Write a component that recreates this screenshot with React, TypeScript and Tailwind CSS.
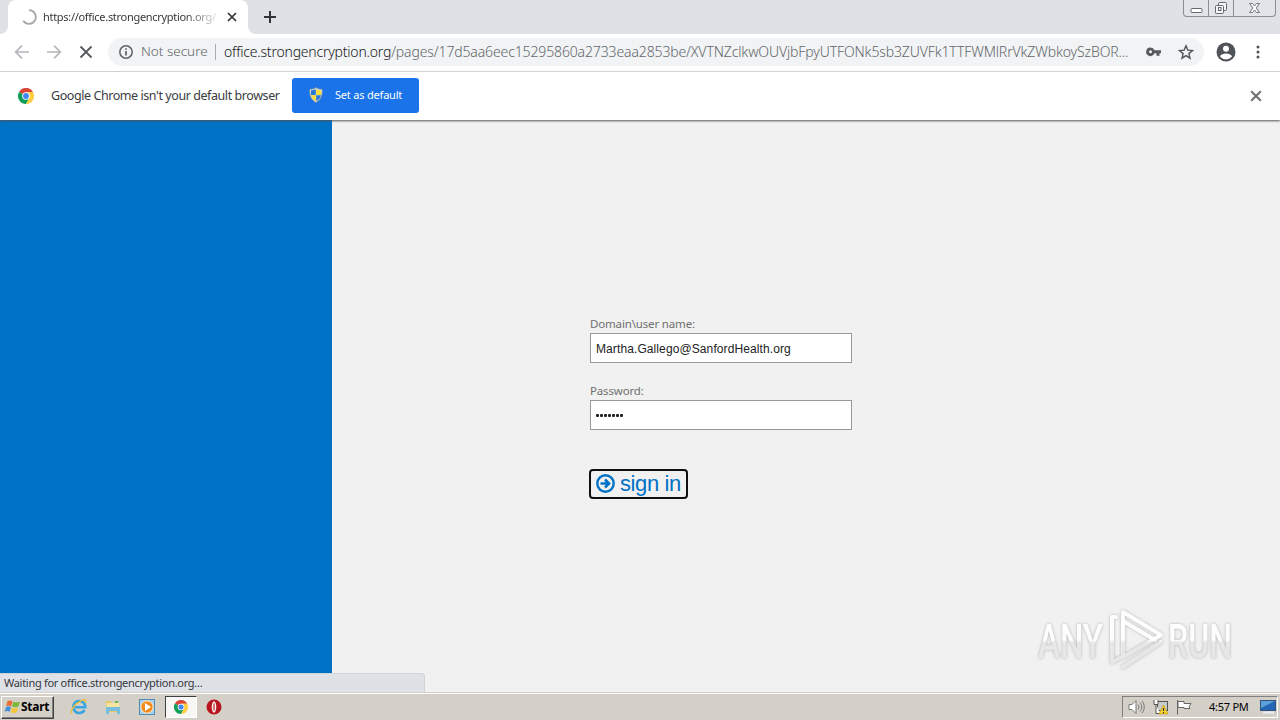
import { type ReactNode } from 'react';

const ui = "font-['Noto_Sans','Open_Sans',sans-serif]";
const arial = "font-['Liberation_Sans',Arial,sans-serif]";

function ChromeLogo({ size }: { size: number }) {
  return (
    <svg width={size} height={size} viewBox="0 0 48 48" className="shrink-0">
      <path d="M24 24 3.2 12A24 24 0 0 1 44.8 12Z" fill="#db4437" />
      <path d="M24 24 3.2 12A24 24 0 0 0 24 48L34.4 30Z" fill="#0f9d58" />
      <path d="M24 12H44.8A24 24 0 0 1 24 48L34.4 30Z" fill="#ffcd40" />
      <circle cx="24" cy="24" r="11.5" fill="#fff" />
      <circle cx="24" cy="24" r="8.7" fill="#4285f4" />
    </svg>
  );
}

function Cross({ size, className }: { size: number; className: string }) {
  return (
    <svg width={size} height={size} viewBox="0 0 10 10" className={className} fill="none" stroke="currentColor">
      <path d="M1 1 9 9M9 1 1 9" strokeWidth={1.7} />
    </svg>
  );
}

function WindowButtons() {
  return (
    <div className="mr-1 ml-auto flex h-[17px] w-[93px] rounded-b-[4px] border border-t-0 border-[#8b8e94] bg-[#e1e4e9] text-[#666970]">
      <div className="flex w-[25px] justify-center border-r border-[#8b8e94]">
        <svg width="13" height="16" fill="#fff" stroke="currentColor">
          <rect x="1" y="8.5" width="11" height="4" rx="1" />
        </svg>
      </div>
      <div className="flex w-[25px] justify-center border-r border-[#8b8e94]">
        <svg width="14" height="16" fill="#f3f4f6" stroke="currentColor">
          <rect x="4.5" y="2.5" width="8" height="8" rx="1" />
          <rect x="1.5" y="5.5" width="8" height="8" rx="1" />
          <rect x="4.5" y="7.5" width="2.5" height="3" />
        </svg>
      </div>
      <div className="flex flex-1 justify-center">
        <svg width="13" height="16" fill="#f8f8f9" stroke="currentColor" strokeWidth=".9">
          <path d="M1.5 3.5h3l2 2.5 2-2.500h3L8.300 8l3.200 4.500h-3l-2-2.500-2 2.500h-3L4.700 8Z" />
        </svg>
      </div>
    </div>
  );
}

function TabStrip() {
  return (
    <div className="flex h-[34px] bg-[#dee1e6] pl-2">
      <div className="relative flex w-60 items-center rounded-t-lg bg-white pl-[13px]">
        <svg viewBox="0 0 8 8" className="absolute bottom-0 -left-2 size-2 fill-white">
          <path d="M8 0v8H0A8 8 0 0 0 8 0Z" />
        </svg>
        <svg viewBox="0 0 8 8" className="absolute -right-2 bottom-0 size-2 fill-white">
          <path d="M0 0v8h8A8 8 0 0 1 0 0Z" />
        </svg>
        <svg width="16" height="16" viewBox="0 0 16 16" fill="none" stroke="#a5a8ab" strokeWidth="1.8">
          <path d="M8 1.200a6.800 6.800 0 1 1-5.700 10.500" />
        </svg>
        <span className="ml-[6px] bg-linear-to-r from-[#303236] from-82% to-[#303236]/15 bg-clip-text text-[11px] tracking-[-0.300px] whitespace-nowrap text-transparent">
          https://office.strongencryption.org/
        </span>
        <Cross size={10} className="absolute top-[12px] left-[219px] text-[#303338]" />
      </div>
      <svg width="12" height="12" className="mt-[11px] ml-4" stroke="#303338" strokeWidth="2">
        <path d="M0 6h12M6 0v12" />
      </svg>
      <WindowButtons />
    </div>
  );
}

function Toolbar() {
  return (
    <div className="flex h-[38px] items-center border-b border-[#d9dbde] bg-white pb-[2px] pl-[14px]">
      <svg width="16" height="16" viewBox="0 0 16 16" fill="none" stroke="#b5b7ba" strokeWidth="1.7">
        <path d="M15 8H2M8 1.700 1.700 8 8 14.300" />
      </svg>
      <svg width="16" height="16" viewBox="0 0 16 16" fill="none" stroke="#b5b7ba" strokeWidth="1.7" className="ml-4">
        <path d="M1 8h13M8 1.700 14.300 8 8 14.300" />
      </svg>
      <svg width="14" height="14" viewBox="0 0 14 14" stroke="#55585d" strokeWidth="1.8" className="ml-[17px]">
        <path d="m1.500 1.500 11 11M12.500 1.500l-11 11" />
      </svg>
      <div className="ml-[15px] flex h-7 w-[1096px] items-center rounded-full bg-[#f1f3f4] pl-[11px]">
        <svg width="14" height="14" viewBox="0 0 14 14" fill="none" stroke="#5f6368" strokeWidth="1.5">
          <circle cx="7" cy="7" r="6.2" />
          <path d="M7 6v4.500M7 3.300v1.500" strokeWidth="1.7" />
        </svg>
        <span className="ml-2 w-[67px] text-[13.5px] font-light whitespace-nowrap text-[#5f6368]">Not secure</span>
        <span className="ml-[7px] h-4 w-px bg-[#a9abae]" />
        <span className="ml-2 w-[911px] text-[14px] font-light whitespace-nowrap text-[#63666b]">
          <span className="tracking-[-0.210px] text-[#17181a]">office.strongencryption.org</span>
          <span className="tracking-[-0.130px]">
            /pages/17d5aa6eec15295860a2733eaa2853be/XVTNZclkwOUVjbFpyUTFONk5sb3ZUVFk1TTFWMlRrVkZWbkoySzBOR...
          </span>
        </span>
        <svg width="15" height="10" viewBox="0 0 15 10" fill="#55585d" className="ml-[11px]">
          <path
            fillRule="evenodd"
            d="M4.500.500a4.300 4.300 0 0 1 4 2.800H15v3h-1.500v2.400h-3V6.300h-2A4.300 4.300 0 1 1 4.500.500Zm0 2.800a1.500 1.500 0 1 0 0 3 1.500 1.500 0 0 0 0-3Z"
          />
        </svg>
        <svg width="16" height="16" viewBox="0 0 16 16" fill="none" stroke="#505358" strokeWidth="1.4" className="ml-[17px]">
          <path d="m8 1.800 1.800 4.300 4.700.4-3.600 3.100 1.100 4.600L8 11.700l-4 2.500 1.100-4.600-3.600-3.100 4.700-.4Z" />
        </svg>
      </div>
      <svg width="20" height="20" viewBox="0 0 20 20" className="ml-3">
        <circle cx="10" cy="10" r="9.5" fill="#505358" />
        <circle cx="10" cy="6.8" r="3" fill="#fff" />
        <path d="M3.900 14.200C5 12.300 7.800 11.500 10 11.500s5 .8 6.100 2.700A7.500 7.500 0 0 1 10 17.300a7.500 7.500 0 0 1-6.100-3.100Z" fill="#fff" />
      </svg>
      <svg width="4" height="14" fill="#505358" className="ml-5">
        <circle cx="2" cy="2" r="1.5" />
        <circle cx="2" cy="7" r="1.5" />
        <circle cx="2" cy="12" r="1.5" />
      </svg>
    </div>
  );
}

function Shield() {
  return (
    <svg width="14" height="16" viewBox="0 0 14 16">
      <path
        d="M7 .5C5 2 3 2.300.8 2.300.6 8 1.500 12.500 7 15.500c5.500-3 6.400-7.500 6.200-13.200C11 2.300 9 2 7 .5Z"
        fill="#d8dcd6"
        stroke="#8a9098"
        strokeWidth=".6"
      />
      <path d="M6.800 2C5.300 3 3.700 3.400 2 3.500V8h4.800Z" fill="#2977d4" />
      <path d="M7.200 2C8.700 3 10.300 3.400 12 3.500V8H7.200Z" fill="#f9db3c" />
      <path d="M2 8.200h4.800v6C4 12.700 2.500 10.800 2 8.200Z" fill="#f9db3c" />
      <path d="M12 8.200H7.200v6c2.800-1.500 4.300-3.400 4.800-6Z" fill="#2977d4" />
    </svg>
  );
}

function InfoBar() {
  return (
    <div className="relative z-10 flex h-12 items-center bg-white pl-[18px] shadow-[0_1px_2px_#555]">
      <ChromeLogo size={16} />
      <span className="ml-[17px] w-[241px] text-[12.5px] tracking-[-0.430px] whitespace-nowrap text-[#3a3c40]">
        Google Chrome isn't your default browser
      </span>
      <div className="mb-[2px] flex h-[35px] w-[127px] items-center rounded-[3px] bg-[#1a73e8] pl-[17px] text-white">
        <Shield />
        <span className="ml-3 text-[11px] tracking-[-0.200px] whitespace-nowrap">Set as default</span>
      </div>
      <Cross size={12} className="mr-[18px] ml-auto text-[#6d7074]" />
    </div>
  );
}

function Field({ label, children }: { label: string; children: ReactNode }) {
  return (
    <div>
      <div className="h-[17px] text-[11.5px] leading-[16px] tracking-[-0.160px] text-[#707070]">{label}</div>
      <div className={`flex h-[30px] w-[262px] items-center border border-[#999] bg-white px-[5px] ${arial} text-[12px] text-[#222]`}>
        {children}
      </div>
    </div>
  );
}

function Watermark() {
  return (
    <div className="absolute right-[3px] bottom-[13px] opacity-90">
      <svg width="240" height="72" viewBox="0 0 240 72" fill="none" className="drop-shadow-[0_0_1.5px_#aaa]">
        <defs>
          <linearGradient id="fade" x1="0" y1="0" x2="0" y2="66" gradientUnits="userSpaceOnUse">
            <stop offset=".5" stopColor="#fff" />
            <stop offset=".54" stopColor="#e6e6e6" />
          </linearGradient>
        </defs>
        <g className="font-['Roboto',sans-serif] text-[49px] font-medium" fill="url(#fade)">
          <text x="1" y="51" textLength="65" lengthAdjust="spacingAndGlyphs">ANY</text>
          <text x="131" y="51" textLength="64" lengthAdjust="spacingAndGlyphs">RUN</text>
        </g>
        <g stroke="url(#fade)" strokeWidth="4" strokeLinejoin="round" strokeLinecap="round">
          <path d="M79 10h-4v45l10-5" />
          <path d="M86 48V5l38 23-38 22M86 14l32 19M86 60l38-25" />
        </g>
      </svg>
    </div>
  );
}

function Page() {
  return (
    <main className="relative flex h-[572px] bg-[#f1f1f1]">
      <div className="w-[332px] bg-[#0072c6]" />
      <div className="flex flex-col items-start pt-[196px] pl-[258px]">
        <Field label="Domain\user name:">
          <span className="pt-px tracking-[0.100px]">Martha.Gallego@SanfordHealth.org</span>
        </Field>
        <div className="h-5" />
        <Field label="Password:">
          <div className="flex gap-px">
            {Array.from({ length: 7 }, (_, i) => (
              <span key={i} className="size-[3px] rounded-[1px] bg-[#222]" />
            ))}
          </div>
        </Field>
        <div
          className={`mt-[39px] -ml-px flex h-[30px] w-[99px] items-center rounded-[4px] border-2 border-[#101010] pl-[5px] ${arial} text-[22px] text-[#0072c6]`}
        >
          <svg width="19" height="19" viewBox="0 0 19 19" fill="none" stroke="#0072c6" className="mb-px">
            <circle cx="9.5" cy="9.5" r="8.2" strokeWidth="2.4" />
            <path d="M4.500 9.500h8M9 5.500l4 4-4 4" strokeWidth="2.6" />
          </svg>
          <span className="ml-[5px] leading-none tracking-[-0.400px] whitespace-nowrap">sign in</span>
        </div>
      </div>
      <Watermark />
      <div className="absolute bottom-0 left-0 h-[19px] w-[425px] rounded-tr border-t border-r border-[#d0d3d9] bg-[#dee1e6] pl-1 text-[11px] leading-[18px] tracking-[-0.290px] text-[#36383c]">
        Waiting for office.strongencryption.org...
      </div>
    </main>
  );
}

function Taskbar() {
  return (
    <div className="flex h-7 items-center border-t border-[#d4d0c8] bg-[#d4d0c8] pl-px shadow-[inset_0_1px_0_#fff]">
      <div className="mt-px flex h-[23px] w-[53px] items-center border border-t-white border-r-[#404040] border-b-[#404040] border-l-white pl-[2px] shadow-[inset_-1px_-1px_0_#808080]">
        <svg width="17" height="16" viewBox="0 0 17 16" className="shrink-0">
          <path d="M3.500 2.200C5.500 1 7 1.400 8.500 2.300L7.200 7.200C5.500 6.300 4 6.200 2.200 7Z" fill="#ed6a35" />
          <path d="M9.300 2.700c1.700.9 4 .9 6.700-.2L14.500 7.600c-2.300.9-4.500.9-6.400-.1Z" fill="#7bb83c" />
          <path d="M2 7.900c1.700-.8 3.300-.7 5 .2l-1.300 4.700c-1.700-.9-3.200-.9-5-.1Z" fill="#4393d8" />
          <path d="M7.900 8.400c1.900 1 4 1 6.300.2l-1.400 4.700c-2.200 1-4.300.9-6.200-.1Z" fill="#f4c63b" />
        </svg>
        <span className="text-[12px] font-bold tracking-[-0.250px] text-black">Start</span>
      </div>
      <svg width="18" height="18" viewBox="0 0 18 18" fill="none" className="ml-4">
        <path d="M14.500 12a6 6 0 1 1 .8-2.800H5" stroke="#39a5e2" strokeWidth="2.6" />
        <path d="M2 15.500C-.5 13 5 5 12 2.300c3-1.200 4.500-.3 3.300 2.300" stroke="#edbd38" strokeWidth="1.4" />
      </svg>
      <svg width="16" height="16" viewBox="0 0 16 16" className="ml-[17px]">
        <path d="M1 2h5l1 2h7v9H1Z" fill="#e8c76b" />
        <path d="M2 4h12l1 7H1Z" fill="#f7e5a0" />
        <path d="M1 8h14v7h-3v-3H4v3H1Z" fill="#76bfdf" />
        <path d="M10 2h3v2h-3Z" fill="#68b657" />
      </svg>
      <svg width="16" height="16" viewBox="0 0 16 16" className="ml-[18px]">
        <rect x=".5" y=".5" width="15" height="15" fill="#a6d1ee" stroke="#5289b5" />
        <circle cx="8" cy="8" r="6.2" fill="#f18a1f" stroke="#fff1d0" />
        <path d="m6 4 6 4-6 4Z" fill="#fff" />
      </svg>
      <div className="ml-[10px] flex h-[22px] w-8 items-center justify-center border border-t-[#404040] border-r-white border-b-white border-l-[#404040] bg-[#f8f7f5]">
        <ChromeLogo size={14} />
      </div>
      <svg width="16" height="16" viewBox="0 0 16 16" className="ml-[9px]">
        <circle cx="8" cy="8" r="7.5" fill="#b71420" />
        <ellipse cx="8" cy="8" rx="2.3" ry="5.8" fill="#f8eeee" />
        <ellipse cx="8" cy="8" rx=".6" ry="4" fill="#b71420" />
      </svg>
      <div className="mt-px mr-[2px] ml-auto flex h-[22px] w-[156px] items-center border border-t-[#808080] border-r-white border-b-white border-l-[#808080] pl-[5px]">
        <svg width="17" height="16" viewBox="0 0 17 16" fill="none" stroke="#777">
          <path d="M1 5.500h3l4-4v13l-4-4H1Z" fill="#fff" />
          <path d="M10 5.500c1.200 1.500 1.200 3.500 0 5M12 3.500c2.300 2.500 2.300 6.500 0 9M14 2c3 3.500 3 8.500 0 12" />
        </svg>
        <svg width="17" height="16" viewBox="0 0 17 16" fill="none" className="ml-[7px]">
          <rect x="5.5" y="2.5" width="10" height="9" fill="#c9cbcb" stroke="#555" />
          <path d="M2 1v4.500h4V1M4 5v9.500h4" stroke="#555" fill="#fff" />
          <path d="m11.500 6 4.500 9H7Z" fill="#f8d52a" stroke="#c49714" strokeWidth=".7" />
          <path d="M11.500 9v3M11.500 13v1.200" stroke="#222" strokeWidth="1.1" />
        </svg>
        <svg width="17" height="16" viewBox="0 0 17 16" fill="#fff" stroke="#666" className="ml-[7px]">
          <path d="M1.500 1v14.500M2 2.500h6v2h7l-2 3 1 2H8v-1H2Z" />
        </svg>
        <span className="ml-4 w-10 text-[11px] tracking-[-0.250px] whitespace-nowrap text-black">4:57 PM</span>
        <svg width="16" height="14" viewBox="0 0 16 14" className="ml-[11px]">
          <rect x=".5" y=".5" width="15" height="10" fill="#2465b5" stroke="#31547d" />
          <path d="M1 1h14L1 8Z" fill="#5ba1dc" />
          <path d="M3 12.500h11" stroke="#e8eef4" strokeWidth="2" />
        </svg>
      </div>
    </div>
  );
}

export default function App() {
  return (
    <div className={`h-[720px] w-[1280px] overflow-hidden ${ui}`}>
      <TabStrip />
      <Toolbar />
      <InfoBar />
      <Page />
      <Taskbar />
    </div>
  );
}
